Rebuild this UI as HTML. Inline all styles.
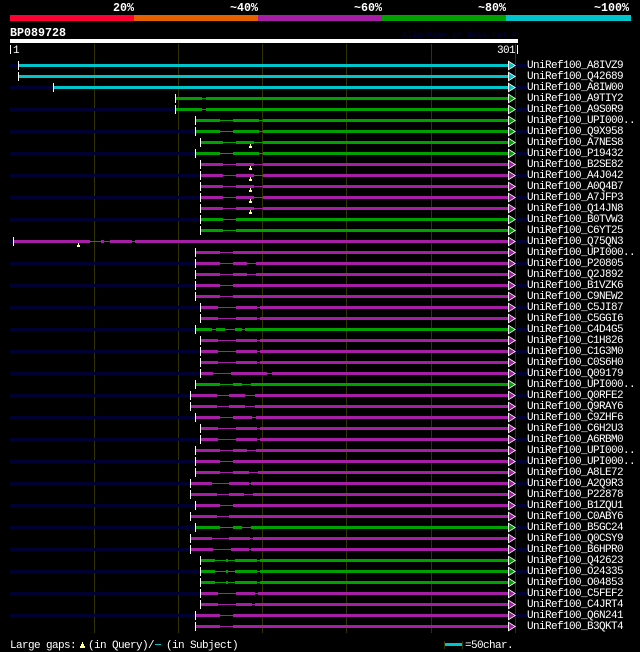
<!DOCTYPE html>
<html><head><meta charset="utf-8"><title>BP089728</title>
<style>
html,body{margin:0;padding:0;background:#000;width:640px;height:652px;overflow:hidden}
svg{display:block}
text{font-family:"Liberation Mono",monospace;fill:#fff;font-size:11px;letter-spacing:-.6px}
.h{font-weight:bold;font-size:11.67px;letter-spacing:0}
path{fill:none;shape-rendering:crispEdges;stroke:currentColor}
rect,polygon{stroke:none}
rect{shape-rendering:crispEdges}
.c{color:#00c4cc;fill:#00c4cc}.g{color:#00a000;fill:#00a000}.p{color:#a61ea6;fill:#a61ea6}
.b{fill:#000033}
path.t{fill:currentColor;stroke:none}
.n{stroke-width:1}
.k{stroke:#fff;stroke-width:1}
.y{fill:#ffff99}
</style></head><body>
<svg width="640" height="652" viewBox="0 0 640 652" xmlns="http://www.w3.org/2000/svg">
<defs>
<rect id="r" x="515" y="0" width="12" height="3" fill="#000033"/>
<g id="a"><polygon points="508,-3.5 516,1.5 508,6.5" style="fill:#fff"/><polygon points="509,-2 514.5,1.5 509,5"/></g>
<g id="q"><rect x="1" y="0" width="1" height="2" class="y"/><rect x="0" y="2" width="3" height="2" class="y"/></g>
</defs>
<text class="h" x="113" y="11">20%</text>
<text class="h" x="230" y="11">~40%</text>
<text class="h" x="354" y="11">~60%</text>
<text class="h" x="478" y="11">~80%</text>
<text class="h" x="594" y="11">~100%</text>
<rect x="10" y="15" width="124" height="6" fill="#ff0033"/>
<rect x="134" y="15" width="124" height="6" fill="#e66000"/>
<rect x="258" y="15" width="124" height="6" fill="#a61ea6"/>
<rect x="382" y="15" width="124" height="6" fill="#00a000"/>
<rect x="506" y="15" width="125" height="6" fill="#00c4cc"/>
<text class="h" x="10" y="36">BP089728</text>
<text x="402" y="37" style="fill:#000033;font-size:8.33px;font-weight:bold;letter-spacing:0">AlignView.pm Beta rel.7</text>
<rect x="10" y="39" width="508" height="4" fill="#fff"/>
<rect x="10" y="45" width="1" height="9" fill="#fff"/>
<text x="13" y="53">1</text>
<text x="497" y="53">301</text>
<rect x="517" y="45" width="1" height="9" fill="#fff"/>
<g fill="#333300">
<rect x="94" y="44" width="1" height="589"/><rect x="178" y="44" width="1" height="589"/><rect x="262" y="44" width="1" height="589"/><rect x="346" y="44" width="1" height="589"/><rect x="431" y="44" width="1" height="589"/><rect x="515" y="44" width="1" height="589"/>
</g>

<g class="c" transform="translate(0,64)"><rect class="b" x="10" width="8" height="3"/><use href="#r"/><path class="t" d="M19 0H508V3H19Z"/><path class="k" d="M18.5 -3V6"/><use href="#a"/><text x="527" y="4">UniRef100_A8IVZ9</text></g>
<g class="c" transform="translate(0,75)"><path class="t" d="M19 0H508V3H19Z"/><path class="k" d="M18.5 -3V6"/><use href="#a"/><text x="527" y="4">UniRef100_Q42689</text></g>
<g class="c" transform="translate(0,86)"><rect class="b" x="10" width="43" height="3"/><use href="#r"/><path class="t" d="M54 0H508V3H54Z"/><path class="k" d="M53.5 -3V6"/><use href="#a"/><text x="527" y="4">UniRef100_A8IW00</text></g>
<g class="g" transform="translate(0,97)"><path class="n" d="M176 1.5H508"/><path class="t" d="M176 0H202V3H176ZM206 0H508V3H206Z"/><path class="k" d="M175.5 -3V6"/><use href="#a"/><text x="527" y="4">UniRef100_A9TIY2</text></g>
<g class="g" transform="translate(0,108)"><rect class="b" x="10" width="165" height="3"/><use href="#r"/><path class="n" d="M176 1.5H508"/><path class="t" d="M176 0H202V3H176ZM206 0H508V3H206Z"/><path class="k" d="M175.5 -3V6"/><use href="#a"/><text x="527" y="4">UniRef100_A9S0R9</text></g>
<g class="g" transform="translate(0,119)"><path class="n" d="M196 1.5H508"/><path class="t" d="M196 0H220V3H196ZM233 0H259V3H233ZM263 0H508V3H263Z"/><path class="k" d="M195.5 -3V6"/><use href="#a"/><text x="527" y="4">UniRef100_UPI000..</text></g>
<g class="g" transform="translate(0,130)"><rect class="b" x="10" width="185" height="3"/><use href="#r"/><path class="n" d="M196 1.5H508"/><path class="t" d="M196 0H220V3H196ZM233 0H259V3H233ZM263 0H508V3H263Z"/><path class="k" d="M195.5 -3V6"/><use href="#a"/><text x="527" y="4">UniRef100_Q9X958</text></g>
<g class="g" transform="translate(0,141)"><path class="n" d="M201 1.5H508"/><path class="t" d="M201 0H223V3H201ZM236 0H254V3H236ZM263 0H508V3H263Z"/><path class="k" d="M200.5 -3V6"/><use href="#a"/><use href="#q" x="249" y="3"/><text x="527" y="4">UniRef100_A7NES8</text></g>
<g class="g" transform="translate(0,152)"><rect class="b" x="10" width="185" height="3"/><use href="#r"/><path class="n" d="M196 1.5H508"/><path class="t" d="M196 0H220V3H196ZM233 0H259V3H233ZM263 0H508V3H263Z"/><path class="k" d="M195.5 -3V6"/><use href="#a"/><text x="527" y="4">UniRef100_P19432</text></g>
<g class="p" transform="translate(0,163)"><path class="n" d="M201 1.5H508"/><path class="t" d="M201 0H223V3H201ZM236 0H254V3H236ZM263 0H508V3H263Z"/><path class="k" d="M200.5 -3V6"/><use href="#a"/><use href="#q" x="249" y="3"/><text x="527" y="4">UniRef100_B2SE82</text></g>
<g class="p" transform="translate(0,174)"><rect class="b" x="10" width="190" height="3"/><use href="#r"/><path class="n" d="M201 1.5H508"/><path class="t" d="M201 0H223V3H201ZM236 0H254V3H236ZM263 0H508V3H263Z"/><path class="k" d="M200.5 -3V6"/><use href="#a"/><use href="#q" x="249" y="3"/><text x="527" y="4">UniRef100_A4J042</text></g>
<g class="p" transform="translate(0,185)"><path class="n" d="M201 1.5H508"/><path class="t" d="M201 0H223V3H201ZM236 0H254V3H236ZM263 0H508V3H263Z"/><path class="k" d="M200.5 -3V6"/><use href="#a"/><use href="#q" x="249" y="3"/><text x="527" y="4">UniRef100_A0Q4B7</text></g>
<g class="p" transform="translate(0,196)"><rect class="b" x="10" width="190" height="3"/><use href="#r"/><path class="n" d="M201 1.5H508"/><path class="t" d="M201 0H223V3H201ZM236 0H254V3H236ZM263 0H508V3H263Z"/><path class="k" d="M200.5 -3V6"/><use href="#a"/><use href="#q" x="249" y="3"/><text x="527" y="4">UniRef100_A7JFP3</text></g>
<g class="p" transform="translate(0,207)"><path class="n" d="M201 1.5H508"/><path class="t" d="M201 0H223V3H201ZM236 0H254V3H236ZM263 0H508V3H263Z"/><path class="k" d="M200.5 -3V6"/><use href="#a"/><use href="#q" x="249" y="3"/><text x="527" y="4">UniRef100_Q14JN8</text></g>
<g class="g" transform="translate(0,218)"><rect class="b" x="10" width="190" height="3"/><use href="#r"/><path class="n" d="M201 1.5H508"/><path class="t" d="M201 0H223V3H201ZM236 0H508V3H236Z"/><path class="k" d="M200.5 -3V6"/><use href="#a"/><text x="527" y="4">UniRef100_B0TVW3</text></g>
<g class="g" transform="translate(0,229)"><path class="n" d="M201 1.5H508"/><path class="t" d="M201 0H223V3H201ZM236 0H508V3H236Z"/><path class="k" d="M200.5 -3V6"/><use href="#a"/><text x="527" y="4">UniRef100_C6YT25</text></g>
<g class="p" transform="translate(0,240)"><rect class="b" x="10" width="3" height="3"/><use href="#r"/><path class="n" d="M14 1.5H508"/><path class="t" d="M14 0H90V3H14ZM101 0H104V3H101ZM110 0H132V3H110ZM135 0H508V3H135Z"/><path class="k" d="M13.5 -3V6"/><use href="#a"/><use href="#q" x="77" y="3"/><text x="527" y="4">UniRef100_Q75QN3</text></g>
<g class="p" transform="translate(0,251)"><path class="n" d="M196 1.5H508"/><path class="t" d="M196 0H220V3H196ZM233 0H508V3H233Z"/><path class="k" d="M195.5 -3V6"/><use href="#a"/><text x="527" y="4">UniRef100_UPI000..</text></g>
<g class="p" transform="translate(0,262)"><rect class="b" x="10" width="185" height="3"/><use href="#r"/><path class="n" d="M196 1.5H508"/><path class="t" d="M196 0H220V3H196ZM233 0H247V3H233ZM256 0H508V3H256Z"/><path class="k" d="M195.5 -3V6"/><use href="#a"/><text x="527" y="4">UniRef100_P20805</text></g>
<g class="p" transform="translate(0,273)"><path class="n" d="M196 1.5H508"/><path class="t" d="M196 0H220V3H196ZM233 0H247V3H233ZM256 0H508V3H256Z"/><path class="k" d="M195.5 -3V6"/><use href="#a"/><text x="527" y="4">UniRef100_Q2J892</text></g>
<g class="p" transform="translate(0,284)"><rect class="b" x="10" width="185" height="3"/><use href="#r"/><path class="n" d="M196 1.5H508"/><path class="t" d="M196 0H220V3H196ZM233 0H508V3H233Z"/><path class="k" d="M195.5 -3V6"/><use href="#a"/><text x="527" y="4">UniRef100_B1VZK6</text></g>
<g class="p" transform="translate(0,295)"><path class="n" d="M196 1.5H508"/><path class="t" d="M196 0H220V3H196ZM233 0H508V3H233Z"/><path class="k" d="M195.5 -3V6"/><use href="#a"/><text x="527" y="4">UniRef100_C9NEW2</text></g>
<g class="p" transform="translate(0,306)"><rect class="b" x="10" width="190" height="3"/><use href="#r"/><path class="n" d="M201 1.5H508"/><path class="t" d="M201 0H218V3H201ZM236 0H257V3H236ZM260 0H508V3H260Z"/><path class="k" d="M200.5 -3V6"/><use href="#a"/><text x="527" y="4">UniRef100_C5JI87</text></g>
<g class="p" transform="translate(0,317)"><path class="n" d="M201 1.5H508"/><path class="t" d="M201 0H218V3H201ZM236 0H257V3H236ZM260 0H508V3H260Z"/><path class="k" d="M200.5 -3V6"/><use href="#a"/><text x="527" y="4">UniRef100_C5GGI6</text></g>
<g class="g" transform="translate(0,328)"><rect class="b" x="10" width="185" height="3"/><use href="#r"/><path class="n" d="M196 1.5H508"/><path class="t" d="M196 0H212V3H196ZM216 0H225V3H216ZM235 0H242V3H235ZM245 0H508V3H245Z"/><path class="k" d="M195.5 -3V6"/><use href="#a"/><text x="527" y="4">UniRef100_C4D4G5</text></g>
<g class="p" transform="translate(0,339)"><path class="n" d="M201 1.5H508"/><path class="t" d="M201 0H218V3H201ZM236 0H257V3H236ZM260 0H508V3H260Z"/><path class="k" d="M200.5 -3V6"/><use href="#a"/><text x="527" y="4">UniRef100_C1H826</text></g>
<g class="p" transform="translate(0,350)"><rect class="b" x="10" width="190" height="3"/><use href="#r"/><path class="n" d="M201 1.5H508"/><path class="t" d="M201 0H218V3H201ZM236 0H257V3H236ZM260 0H508V3H260Z"/><path class="k" d="M200.5 -3V6"/><use href="#a"/><text x="527" y="4">UniRef100_C1G3M0</text></g>
<g class="p" transform="translate(0,361)"><path class="n" d="M201 1.5H508"/><path class="t" d="M201 0H218V3H201ZM236 0H257V3H236ZM260 0H508V3H260Z"/><path class="k" d="M200.5 -3V6"/><use href="#a"/><text x="527" y="4">UniRef100_C0S6H0</text></g>
<g class="p" transform="translate(0,372)"><rect class="b" x="10" width="190" height="3"/><use href="#r"/><path class="n" d="M201 1.5H508"/><path class="t" d="M201 0H213V3H201ZM231 0H267V3H231ZM272 0H508V3H272Z"/><path class="k" d="M200.5 -3V6"/><use href="#a"/><text x="527" y="4">UniRef100_Q09179</text></g>
<g class="g" transform="translate(0,383)"><path class="n" d="M196 1.5H508"/><path class="t" d="M196 0H220V3H196ZM233 0H242V3H233ZM251 0H508V3H251Z"/><path class="k" d="M195.5 -3V6"/><use href="#a"/><text x="527" y="4">UniRef100_UPI000..</text></g>
<g class="p" transform="translate(0,394)"><rect class="b" x="10" width="180" height="3"/><use href="#r"/><path class="n" d="M191 1.5H508"/><path class="t" d="M191 0H217V3H191ZM229 0H245V3H229ZM255 0H508V3H255Z"/><path class="k" d="M190.5 -3V6"/><use href="#a"/><text x="527" y="4">UniRef100_Q0RFE2</text></g>
<g class="p" transform="translate(0,405)"><path class="n" d="M191 1.5H508"/><path class="t" d="M191 0H217V3H191ZM229 0H245V3H229ZM255 0H508V3H255Z"/><path class="k" d="M190.5 -3V6"/><use href="#a"/><text x="527" y="4">UniRef100_Q9RAY6</text></g>
<g class="p" transform="translate(0,416)"><rect class="b" x="10" width="185" height="3"/><use href="#r"/><path class="n" d="M196 1.5H508"/><path class="t" d="M196 0H220V3H196ZM233 0H252V3H233ZM256 0H508V3H256Z"/><path class="k" d="M195.5 -3V6"/><use href="#a"/><text x="527" y="4">UniRef100_C9ZHF6</text></g>
<g class="p" transform="translate(0,427)"><path class="n" d="M201 1.5H508"/><path class="t" d="M201 0H218V3H201ZM236 0H257V3H236ZM260 0H508V3H260Z"/><path class="k" d="M200.5 -3V6"/><use href="#a"/><text x="527" y="4">UniRef100_C6H2U3</text></g>
<g class="p" transform="translate(0,438)"><rect class="b" x="10" width="190" height="3"/><use href="#r"/><path class="n" d="M201 1.5H508"/><path class="t" d="M201 0H218V3H201ZM236 0H257V3H236ZM260 0H508V3H260Z"/><path class="k" d="M200.5 -3V6"/><use href="#a"/><text x="527" y="4">UniRef100_A6RBM0</text></g>
<g class="p" transform="translate(0,449)"><path class="n" d="M196 1.5H508"/><path class="t" d="M196 0H220V3H196ZM233 0H247V3H233ZM256 0H508V3H256Z"/><path class="k" d="M195.5 -3V6"/><use href="#a"/><text x="527" y="4">UniRef100_UPI000..</text></g>
<g class="p" transform="translate(0,460)"><rect class="b" x="10" width="185" height="3"/><use href="#r"/><path class="n" d="M196 1.5H508"/><path class="t" d="M196 0H220V3H196ZM233 0H508V3H233Z"/><path class="k" d="M195.5 -3V6"/><use href="#a"/><text x="527" y="4">UniRef100_UPI000..</text></g>
<g class="p" transform="translate(0,471)"><path class="n" d="M196 1.5H508"/><path class="t" d="M196 0H220V3H196ZM233 0H249V3H233ZM258 0H508V3H258Z"/><path class="k" d="M195.5 -3V6"/><use href="#a"/><text x="527" y="4">UniRef100_A8LE72</text></g>
<g class="p" transform="translate(0,482)"><rect class="b" x="10" width="180" height="3"/><use href="#r"/><path class="n" d="M191 1.5H508"/><path class="t" d="M191 0H212V3H191ZM229 0H249V3H229ZM251 0H508V3H251Z"/><path class="k" d="M190.5 -3V6"/><use href="#a"/><text x="527" y="4">UniRef100_A2Q9R3</text></g>
<g class="p" transform="translate(0,493)"><path class="n" d="M191 1.5H508"/><path class="t" d="M191 0H217V3H191ZM229 0H244V3H229ZM253 0H508V3H253Z"/><path class="k" d="M190.5 -3V6"/><use href="#a"/><text x="527" y="4">UniRef100_P22878</text></g>
<g class="p" transform="translate(0,504)"><rect class="b" x="10" width="185" height="3"/><use href="#r"/><path class="n" d="M196 1.5H508"/><path class="t" d="M196 0H220V3H196ZM233 0H508V3H233Z"/><path class="k" d="M195.5 -3V6"/><use href="#a"/><text x="527" y="4">UniRef100_B1ZQU1</text></g>
<g class="p" transform="translate(0,515)"><path class="n" d="M191 1.5H508"/><path class="t" d="M191 0H217V3H191ZM229 0H508V3H229Z"/><path class="k" d="M190.5 -3V6"/><use href="#a"/><text x="527" y="4">UniRef100_C0ABY6</text></g>
<g class="g" transform="translate(0,526)"><rect class="b" x="10" width="185" height="3"/><use href="#r"/><path class="n" d="M196 1.5H508"/><path class="t" d="M196 0H220V3H196ZM233 0H242V3H233ZM251 0H508V3H251Z"/><path class="k" d="M195.5 -3V6"/><use href="#a"/><text x="527" y="4">UniRef100_B5GC24</text></g>
<g class="p" transform="translate(0,537)"><path class="n" d="M191 1.5H508"/><path class="t" d="M191 0H212V3H191ZM229 0H250V3H229ZM253 0H508V3H253Z"/><path class="k" d="M190.5 -3V6"/><use href="#a"/><text x="527" y="4">UniRef100_Q0CSY9</text></g>
<g class="p" transform="translate(0,548)"><rect class="b" x="10" width="180" height="3"/><use href="#r"/><path class="n" d="M191 1.5H508"/><path class="t" d="M191 0H213V3H191ZM231 0H249V3H231ZM251 0H508V3H251Z"/><path class="k" d="M190.5 -3V6"/><use href="#a"/><text x="527" y="4">UniRef100_B6HPR0</text></g>
<g class="g" transform="translate(0,559)"><path class="n" d="M201 1.5H508"/><path class="t" d="M201 0H215V3H201ZM226 0H228V3H226ZM235 0H257V3H235ZM260 0H508V3H260Z"/><path class="k" d="M200.5 -3V6"/><use href="#a"/><text x="527" y="4">UniRef100_Q42623</text></g>
<g class="g" transform="translate(0,570)"><rect class="b" x="10" width="190" height="3"/><use href="#r"/><path class="n" d="M201 1.5H508"/><path class="t" d="M201 0H215V3H201ZM226 0H228V3H226ZM235 0H257V3H235ZM260 0H508V3H260Z"/><path class="k" d="M200.5 -3V6"/><use href="#a"/><text x="527" y="4">UniRef100_O24335</text></g>
<g class="g" transform="translate(0,581)"><path class="n" d="M201 1.5H508"/><path class="t" d="M201 0H215V3H201ZM226 0H228V3H226ZM235 0H257V3H235ZM260 0H508V3H260Z"/><path class="k" d="M200.5 -3V6"/><use href="#a"/><text x="527" y="4">UniRef100_O04853</text></g>
<g class="p" transform="translate(0,592)"><rect class="b" x="10" width="190" height="3"/><use href="#r"/><path class="n" d="M201 1.5H508"/><path class="t" d="M201 0H218V3H201ZM236 0H255V3H236ZM258 0H508V3H258Z"/><path class="k" d="M200.5 -3V6"/><use href="#a"/><text x="527" y="4">UniRef100_C5FEF2</text></g>
<g class="p" transform="translate(0,603)"><path class="n" d="M201 1.5H508"/><path class="t" d="M201 0H218V3H201ZM236 0H252V3H236ZM255 0H508V3H255Z"/><path class="k" d="M200.5 -3V6"/><use href="#a"/><text x="527" y="4">UniRef100_C4JRT4</text></g>
<g class="p" transform="translate(0,614)"><rect class="b" x="10" width="185" height="3"/><use href="#r"/><path class="n" d="M196 1.5H508"/><path class="t" d="M196 0H220V3H196ZM233 0H508V3H233Z"/><path class="k" d="M195.5 -3V6"/><use href="#a"/><text x="527" y="4">UniRef100_Q6N241</text></g>
<g class="p" transform="translate(0,625)"><path class="n" d="M196 1.5H508"/><path class="t" d="M196 0H220V3H196ZM233 0H508V3H233Z"/><path class="k" d="M195.5 -3V6"/><use href="#a"/><text x="527" y="4">UniRef100_B3QKT4</text></g>

<text x="10" y="648">Large gaps:</text>
<rect x="82" y="642" width="1" height="2" class="y"/><rect x="81" y="644" width="3" height="2" class="y"/><rect x="80" y="646" width="5" height="2" class="y"/>
<text x="88" y="648">(in Query)/</text>
<rect x="155" y="644" width="6" height="1" fill="#00c4cc"/>
<text x="166" y="648">(in Subject)</text>
<rect x="444" y="641" width="1" height="8" fill="#333300"/><rect x="462" y="641" width="1" height="8" fill="#333300"/>
<rect x="445" y="643" width="17" height="3" fill="#00c4cc"/>
<text x="465" y="648">=50char.</text>
</svg>
</body></html>
